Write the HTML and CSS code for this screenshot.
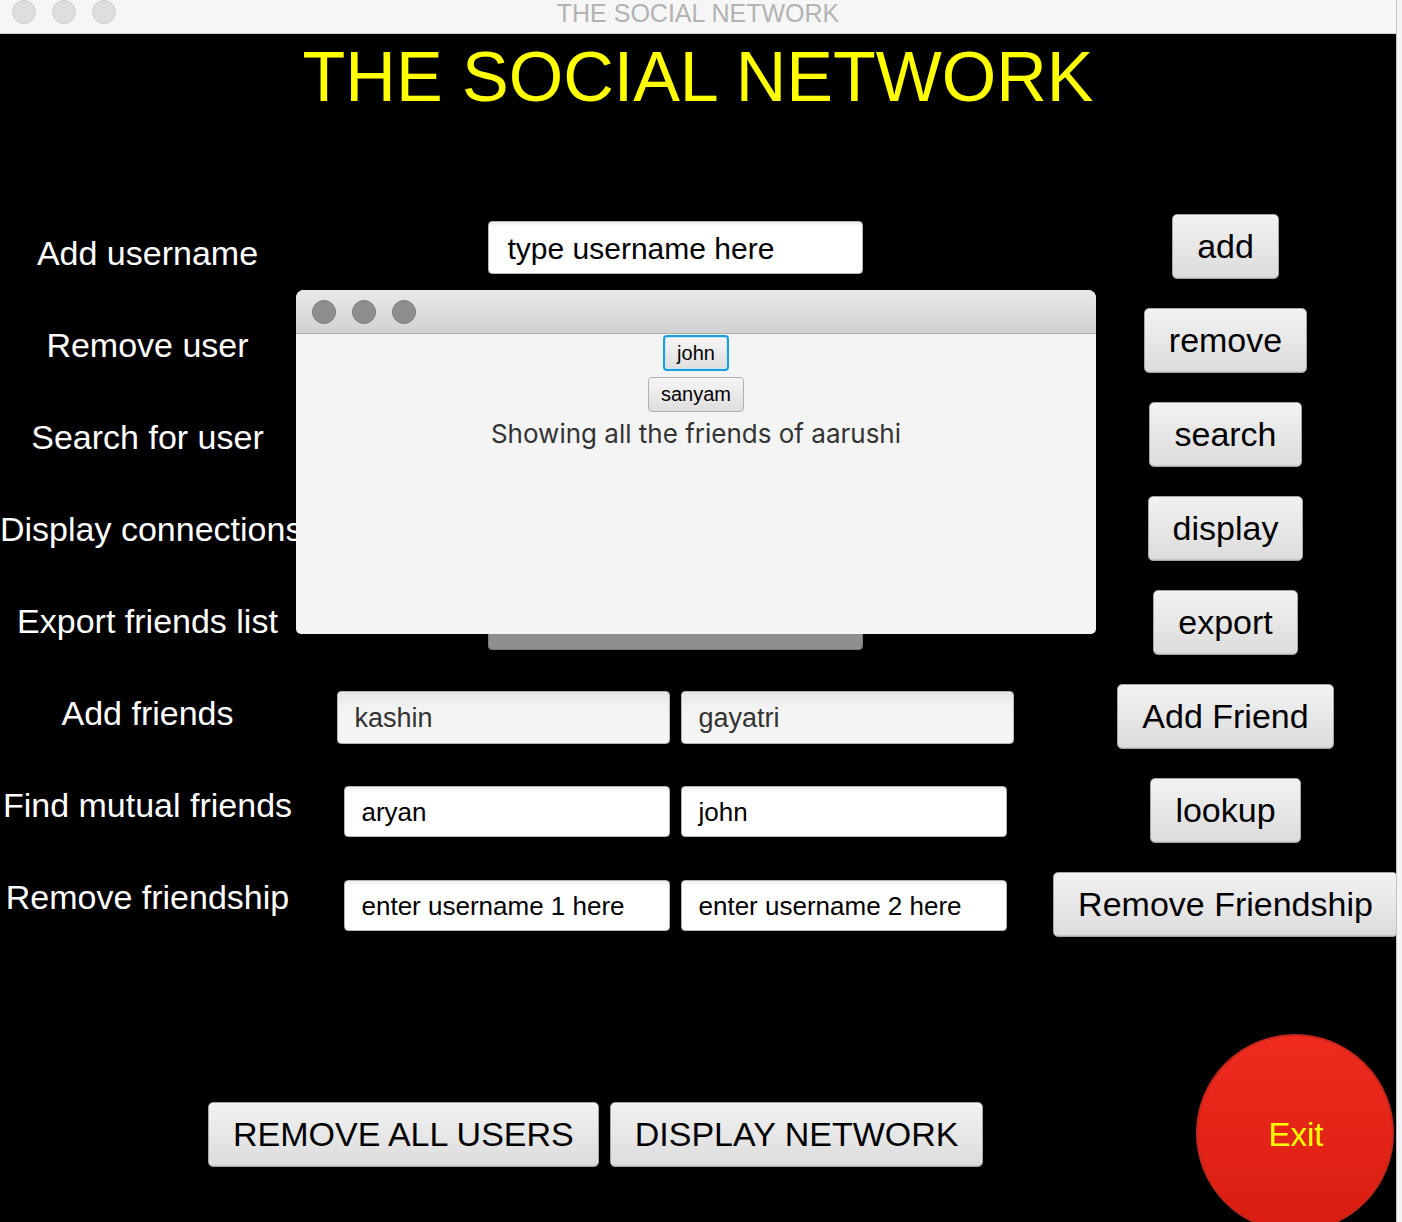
FILE: index.html
```html
<!DOCTYPE html>
<html>
<head>
<meta charset="utf-8">
<title>THE SOCIAL NETWORK</title>
<link rel="stylesheet" href="styles.css">
</head>
<body>
<div class="screen">
  <div class="window">
    <div class="titlebar">
      <div class="lights">
        <span class="light"></span><span class="light"></span><span class="light"></span>
      </div>
      <div class="wtitle">THE SOCIAL NETWORK</div>
      <div></div>
    </div>
    <div class="content">
      <h1 class="heading">THE SOCIAL NETWORK</h1>
      <div class="form">
        <div class="labels">
          <div class="label">Add username</div>
          <div class="label">Remove user</div>
          <div class="label">Search for user</div>
          <div class="label">Display connections</div>
          <div class="label">Export friends list</div>
          <div class="label">Add friends</div>
          <div class="label">Find mutual friends</div>
          <div class="label">Remove friendship</div>
        </div>
        <div class="grid">
          <div class="field f-wide">type username here</div>
          <button class="btn">add</button>

          <div class="field f-wide"></div>
          <button class="btn">remove</button>

          <div class="field f-wide"></div>
          <button class="btn">search</button>

          <div class="field f-wide"></div>
          <button class="btn">display</button>

          <div class="field f-wide f-dim">enter file name</div>
          <button class="btn">export</button>

          <div class="pair">
            <div class="field f-gray">kashin</div>
            <div class="field f-gray">gayatri</div>
          </div>
          <button class="btn">Add Friend</button>

          <div class="pair">
            <div class="field f-half">aryan</div>
            <div class="field f-half">john</div>
          </div>
          <button class="btn">lookup</button>

          <div class="pair">
            <div class="field f-half">enter username 1 here</div>
            <div class="field f-half">enter username 2 here</div>
          </div>
          <button class="btn">Remove Friendship</button>
        </div>
      </div>
      <div class="bottom">
        <button class="btn btn-low">REMOVE ALL USERS</button>
        <button class="btn btn-low">DISPLAY NETWORK</button>
        <div class="exit">Exit</div>
      </div>
    </div>

    <div class="dialog">
      <div class="dbar">
        <span class="dlight"></span><span class="dlight"></span><span class="dlight"></span>
      </div>
      <div class="dbody">
        <button class="chip chip-focus">john</button>
        <button class="chip">sanyam</button>
        <div class="dtext">Showing all the friends of aarushi</div>
      </div>
    </div>
  </div>
  <div class="side"></div>
</div>
</body>
</html>
```

FILE: styles.css
```css
html, body {
  margin: 0;
  padding: 0;
  background: #f2f2f2;
}

.screen {
  display: flex;
  width: 1402px;
  height: 1222px;
  overflow: hidden;
}

.window {
  position: relative;
  width: 1396px;
  height: 1222px;
  overflow: hidden;
  background: #000;
  font-family: "Liberation Sans", Arial, sans-serif;
}

.side {
  width: 5px;
  height: 1222px;
  background: #f4f4f4;
  border-left: 1px solid #c4c4c4;
}

/* main title bar */
.titlebar {
  height: 33px;
  border-bottom: 1px solid #d4d4d4;
  background: #f6f6f6;
  display: grid;
  grid-template-columns: 1fr auto 1fr;
  align-items: start;
}

.lights {
  display: flex;
  gap: 16px;
  padding-left: 12px;
}

.light {
  width: 22px;
  height: 22px;
  border-radius: 50%;
  background: #dedede;
  border: 1px solid #d0d0d0;
}

.wtitle {
  font-size: 25px;
  line-height: 27px;
  color: #b3b3b3;
  white-space: nowrap;
}

/* content */
.content {
  height: 1188px;
}

.heading {
  margin: 3px 0 0;
  font-size: 70px;
  line-height: 80px;
  font-weight: normal;
  text-align: center;
  color: #ffff00;
}

.form {
  display: flex;
  margin-top: 82px;
}

.labels {
  width: 295px;
  flex: none;
  padding-top: 8px;
}

.label {
  height: 92px;
  line-height: 92px;
  font-size: 34px;
  color: #fff;
  text-align: center;
  white-space: nowrap;
}

.grid {
  display: grid;
  grid-template-columns: 760px 341px;
  grid-auto-rows: 94px;
  align-items: center;
  justify-items: center;
}

.pair {
  display: flex;
  gap: 11px;
  margin-top: 2px;
}

.field {
  box-sizing: border-box;
  border: 1px solid #b4b4b4;
  border-radius: 4px;
  background: linear-gradient(#f0f0f0 0, #ffffff 6px, #ffffff 100%);
  color: #000;
  white-space: nowrap;
  overflow: hidden;
}

.f-wide {
  width: 375px;
  height: 53px;
  line-height: 53px;
  font-size: 30px;
  padding-left: 19px;
  margin-top: 3px;
}

.f-dim {
  background: #8f8f8f;
  border-color: #7a7a7a;
  color: #1a1a1a;
  font-size: 26px;
}

.f-gray {
  width: 333px;
  height: 53px;
  line-height: 53px;
  font-size: 27px;
  padding-left: 17px;
  color: #333;
  background: linear-gradient(#e6e6e6 0, #f3f3f3 30%, #f6f6f6 100%);
}

.f-half {
  width: 326px;
  height: 51px;
  line-height: 51px;
  font-size: 26px;
  padding-left: 17px;
}

.btn {
  box-sizing: border-box;
  height: 65px;
  padding: 0 24px;
  margin: 0;
  font-family: "Liberation Sans", Arial, sans-serif;
  font-size: 34px;
  color: #000;
  border: 1px solid #a6a6a6;
  border-radius: 5px;
  background: linear-gradient(#f2f2f2, #dcdcdc);
  box-shadow: inset 0 -1px 0 #c8c8c8;
  white-space: nowrap;
}

.bottom {
  display: flex;
  align-items: center;
  gap: 11px;
  margin-top: 83px;
  padding-left: 208px;
}

.btn-low {
  margin-top: 3px;
}

.exit {
  margin-left: auto;
  margin-right: 2px;
  box-sizing: border-box;
  width: 198px;
  height: 198px;
  flex: none;
  border-radius: 50%;
  background: linear-gradient(#ef2b1f, #d91d10);
  border: 2px solid #c3261a;
  color: #ffff00;
  font-size: 33px;
  padding: 3px 0 0 2px;
  display: flex;
  align-items: center;
  justify-content: center;
}

/* dialog overlay */
.dialog {
  position: absolute;
  left: 296px;
  top: 290px;
  width: 800px;
  height: 344px;
  border-radius: 8px 8px 5px 5px;
  overflow: hidden;
  background: #f4f4f4;
}

.dbar {
  height: 43px;
  border-bottom: 1px solid #acacac;
  background: linear-gradient(#e9e9e9, #d1d1d1);
  display: flex;
  align-items: center;
  gap: 16px;
  padding-left: 16px;
}

.dlight {
  box-sizing: border-box;
  width: 24px;
  height: 24px;
  border-radius: 50%;
  background: #8e8e8e;
  border: 1px solid #7d7d7d;
}

.dbody {
  display: flex;
  flex-direction: column;
  align-items: center;
  padding-top: 1px;
}

.chip {
  box-sizing: border-box;
  height: 35px;
  margin: 0 0 6px;
  padding: 0 12px;
  font-family: "Liberation Sans", Arial, sans-serif;
  font-size: 20px;
  color: #000;
  border: 1px solid #b0b0b0;
  border-radius: 4px;
  background: linear-gradient(#f6f6f6, #dedede);
}

.chip-focus {
  height: 36px;
  border: 2px solid #1b9fdc;
  box-shadow: inset 0 0 0 1px #c4e6f7;
}

.dtext {
  font-family: Inter, "Liberation Sans", sans-serif;
  font-size: 26px;
  line-height: 32px;
  color: #333;
  white-space: nowrap;
}
```
